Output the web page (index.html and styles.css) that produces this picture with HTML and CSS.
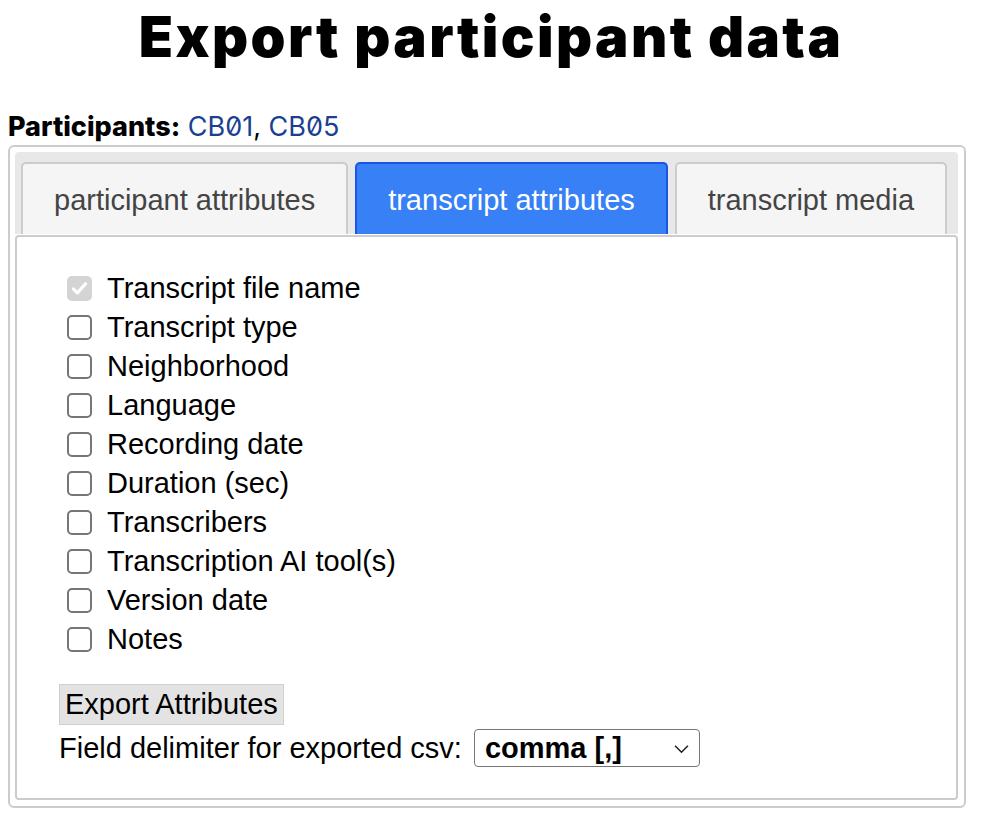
FILE: index.html
```html
<!DOCTYPE html>
<html>
<head>
<meta charset="utf-8">
<link rel="stylesheet" href="styles.css">
</head>
<body>
<h1 class="title">Export participant data</h1>
<div class="participants"><span class="plabel">Participants:</span> <a class="pid">CB01</a>, <a class="pid">CB05</a></div>
<div class="box">
  <div class="tabs">
    <div class="tab">participant attributes</div>
    <div class="tab active">transcript attributes</div>
    <div class="tab">transcript media</div>
  </div>
  <div class="panel">
    <ul class="attrs">
      <li><span class="cb checked"><svg viewBox="0 0 24 24" width="21" height="21"><path d="M5 12.5l4.5 4.5L19 6.5" fill="none" stroke="#fff" stroke-width="3.6" stroke-linecap="round" stroke-linejoin="round"/></svg></span>Transcript file name</li>
      <li><span class="cb"></span>Transcript type</li>
      <li><span class="cb"></span>Neighborhood</li>
      <li><span class="cb"></span>Language</li>
      <li><span class="cb"></span>Recording date</li>
      <li><span class="cb"></span>Duration (sec)</li>
      <li><span class="cb"></span>Transcribers</li>
      <li><span class="cb"></span>Transcription AI tool(s)</li>
      <li><span class="cb"></span>Version date</li>
      <li><span class="cb"></span>Notes</li>
    </ul>
    <div class="actions">
      <button class="export">Export Attributes</button>
      <div class="delim">Field delimiter for exported csv: <span class="select">comma [,]<svg class="chev" viewBox="0 0 14 9" width="15" height="10"><path d="M1 1.5l6 6 6-6" fill="none" stroke="#222" stroke-width="1.5"/></svg></span></div>
    </div>
  </div>
</div>
</body>
</html>
```
FILE: styles.css
```css
body {
  margin: 8px;
  font-family: "Liberation Sans", Arial, sans-serif;
  color: #000;
  background: #fff;
}
.title {
  font-family: Inter, "Noto Sans", sans-serif;
  font-weight: 900;
  font-size: 56px;
  text-align: center;
  margin: -3px 0 0 0;
  line-height: 64px;
  letter-spacing: 2.4px;
}
.participants {
  font-family: Inter, "Noto Sans", sans-serif;
  font-size: 27px;
  margin-top: 42px;
  line-height: 32px;
}
.plabel { font-weight: 800; }
.pid {
  color: #1b3f92;
  font-feature-settings: "zero" 1;
  text-decoration: none;
}
.box {
  border: 2px solid #cccccc;
  border-radius: 6px;
  padding: 5px 6px 6px 5px;
  margin: 2px 8px 0 0;
}
.tabs {
  background: #e8e8e8;
  border-radius: 4px 4px 0 0;
  display: flex;
  gap: 7px;
  padding: 10px 6px 0 6px;
  height: 82px;
  box-sizing: border-box;
  align-items: flex-end;
}
.tab {
  height: 72px;
  box-sizing: border-box;
  padding: 19px 31px 0 31px;
  background: #f5f5f5;
  border: 2px solid #cccccc;
  border-bottom: none;
  border-radius: 5px 5px 0 0;
  font-size: 29px;
  color: #444;
  line-height: 34px;
  white-space: nowrap;
}
.tab.active {
  background: #3780f5;
  border-color: #1b55e3;
  color: #fff;
}
.panel {
  border: 2px solid #cccccc;
  border-radius: 4px;
  margin-top: 1px;
  padding: 32px 0 30px 50px;
}
.attrs {
  list-style: none;
  margin: 0;
  padding: 0;
}
.attrs li {
  display: flex;
  align-items: center;
  height: 39px;
  font-size: 29px;
  line-height: 39px;
}
.cb {
  width: 25px;
  height: 25px;
  box-sizing: border-box;
  border: 2px solid #767676;
  border-radius: 5px;
  margin-right: 15px;
  background: #fff;
  display: inline-flex;
  align-items: center;
  justify-content: center;
  flex: none;
}
.cb.checked {
  border: none;
  background: #d4d4d4;
}
.actions {
  margin-top: 25px;
  margin-left: -8px;
}
.export {
  font-family: "Liberation Sans", Arial, sans-serif;
  font-size: 29px;
  padding: 0 5px;
  height: 41px;
  background: #e3e3e3;
  border: 1px solid #cfcfcf;
  border-radius: 0;
  color: #000;
  display: block;
}
.delim {
  font-size: 29px;
  line-height: 40px;
  display: flex;
  align-items: center;
  gap: 12px;
  margin-top: 3px;
}
.select {
  display: inline-flex;
  align-items: center;
  justify-content: space-between;
  width: 226px;
  height: 38px;
  box-sizing: border-box;
  border: 1px solid #767676;
  border-radius: 4px;
  padding: 0 10px 0 10px;
  font-weight: bold;
  font-size: 29px;
}
.chev { margin-top: 2px; }
```
